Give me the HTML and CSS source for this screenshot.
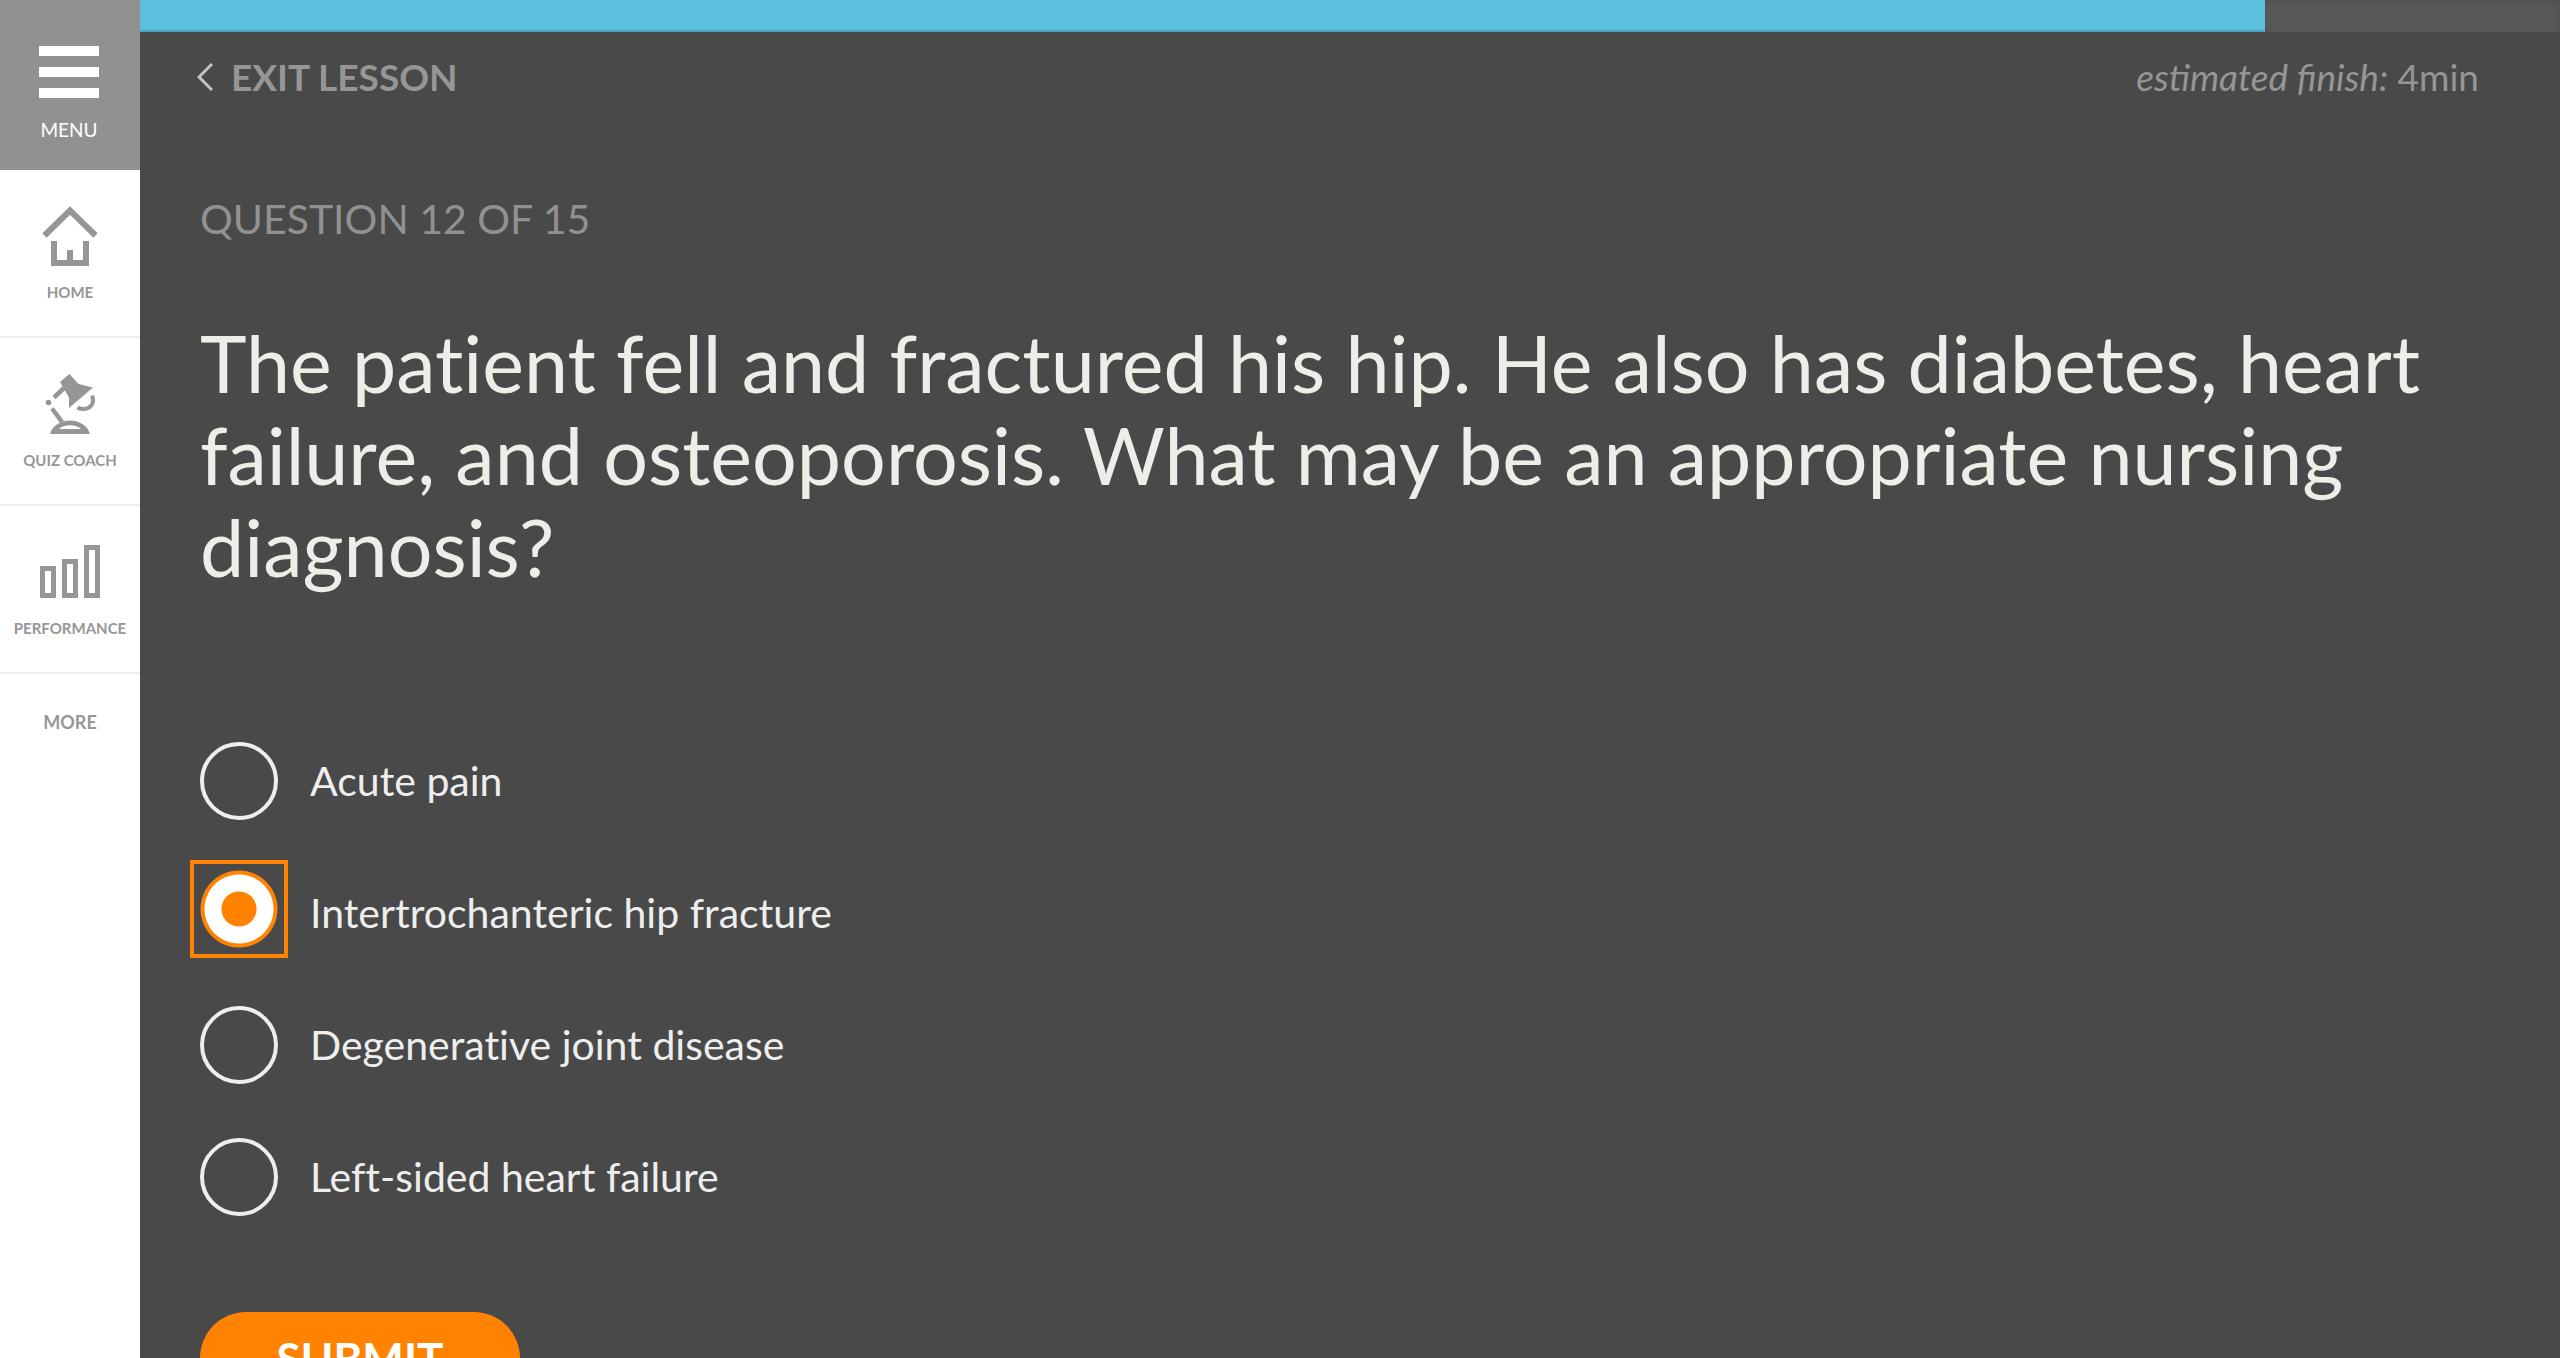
FILE: index.html
```html
<!DOCTYPE html>
<html lang="en">
<head>
  <meta charset="utf-8">
  <title>Lesson question</title>
  <link rel="stylesheet" href="styles.css">
</head>
<body>
  <div class="app">
    <nav class="sidebar" aria-label="Main">
      <button class="menu-button" type="button">
        <svg class="menu-icon" viewBox="0 0 60 52" aria-hidden="true">
          <path d="M0 0h60v10H0zM0 21h60v10H0zM0 42h60v10H0z" fill="currentColor"/>
        </svg>
        <span>MENU</span>
      </button>
      <a class="nav-item" href="#home">
        <svg class="nav-icon" viewBox="0 0 60 60" aria-hidden="true" fill="none" stroke="currentColor" stroke-width="6">
          <path d="M4.500 29.500L30 4.500l25.500 25"/>
          <path d="M14 35v22h32V35M30 44v14"/>
        </svg>
        <span>HOME</span>
      </a>
      <a class="nav-item" href="#quiz-coach">
        <svg class="nav-icon" viewBox="0 0 60 60" aria-hidden="true" fill="none" stroke="currentColor">
          <path d="M20 8L29.500 0l9 10L53 13.500 29 34V23.500z" fill="currentColor" stroke="none"/>
          <path d="M24.500 13.500L14 23.500M12 34.500l10 13.500" stroke-width="4.500"/>
          <circle cx="8.500" cy="28.500" r="2.800" fill="currentColor" stroke="none"/>
          <path d="M52 21.500c3 7-1 13-8 13.500-2.500 0-5-.5-6.500-1.500" stroke-width="4"/>
          <path d="M10 60c5-18 35-18 40 0zM19 55h22c-5-5-17-5-22 0z" fill="currentColor" fill-rule="evenodd" stroke="none"/>
        </svg>
        <span>QUIZ COACH</span>
      </a>
      <a class="nav-item" href="#performance">
        <svg class="nav-icon" viewBox="0 0 60 60" aria-hidden="true" fill="none" stroke="currentColor" stroke-width="5">
          <path d="M2.500 26.500h11v27h-11zM24.500 19.500h11v34h-11zM46.500 5.500h11v48h-11z"/>
        </svg>
        <span>PERFORMANCE</span>
      </a>
      <a class="nav-more" href="#more">MORE</a>
    </nav>

    <main class="lesson">
      <div class="progress" role="progressbar" aria-valuemin="0" aria-valuemax="100" aria-valuenow="88" aria-label="Lesson progress">
        <div class="progress-fill" style="width: 87.8%"></div>
      </div>

      <header class="topbar">
        <a class="exit" href="#exit">
          <svg class="exit-icon" viewBox="0 0 16 28" aria-hidden="true" fill="none" stroke="currentColor" stroke-width="3">
            <path d="M15 1L2 14l13 13"/>
          </svg>
          <span>EXIT LESSON</span>
        </a>
        <p class="estimate"><em>estimated finish:</em> 4min</p>
      </header>

      <form class="question">
        <p class="counter">QUESTION 12 OF 15</p>
        <h1 class="prompt" id="prompt">The patient fell and fractured his hip. He also has diabetes, heart failure, and osteoporosis. What may be an appropriate nursing diagnosis?</h1>
        <div class="answers" role="radiogroup" aria-labelledby="prompt">
          <label class="answer"><input type="radio" name="answer"><span>Acute pain</span></label>
          <label class="answer"><input type="radio" name="answer" checked><span>Intertrochanteric hip fracture</span></label>
          <label class="answer"><input type="radio" name="answer"><span>Degenerative joint disease</span></label>
          <label class="answer"><input type="radio" name="answer"><span>Left-sided heart failure</span></label>
        </div>
        <button class="submit" type="submit">SUBMIT</button>
      </form>
    </main>
  </div>
</body>
</html>
```
FILE: styles.css
```css
* {
  box-sizing: border-box;
}

body {
  margin: 0;
  font-family: Lato, "Open Sans", sans-serif;
  background: #494949;
  color: #eeeeee;
}

a {
  color: inherit;
  text-decoration: none;
}

button {
  border: 0;
  font-family: inherit;
}

.app {
  display: flex;
  height: 100vh;
}

/* Sidebar */
.sidebar {
  flex: 0 0 140px;
  display: flex;
  flex-direction: column;
  background: #ffffff;
  color: #969696;
}

.menu-button {
  height: 170px;
  padding: 46px 2px 0 0;
  display: flex;
  flex-direction: column;
  align-items: center;
  gap: 20px;
  background: #919191;
  color: #ffffff;
  font-size: 19px;
  line-height: 24px;
}

.menu-icon {
  width: 60px;
  height: 52px;
}

.nav-item {
  height: 168px;
  padding-top: 36px;
  display: flex;
  flex-direction: column;
  align-items: center;
  gap: 16px;
  border-bottom: 2px solid #eeeeee;
  font-size: 15px;
  font-weight: 700;
  line-height: 20px;
}

.nav-icon {
  width: 60px;
  height: 60px;
}

.nav-more {
  padding-top: 36px;
  text-align: center;
  font-size: 18px;
  font-weight: 700;
  line-height: 24px;
}

/* Lesson */
.lesson {
  flex: 1;
  min-width: 0;
  overflow-y: auto;
  scrollbar-width: none;
}

.progress {
  height: 32px;
  background: #585858;
  box-shadow: inset 0 2px 6px rgba(0, 0, 0, 0.1);
}

.progress-fill {
  height: 100%;
  background: #5bc0de;
  border-bottom: 2px solid #4ba3be;
}

.topbar {
  display: flex;
  justify-content: space-between;
  align-items: center;
  height: 90px;
  padding: 0 81px 0 57px;
  color: #969696;
}

.exit {
  display: flex;
  align-items: center;
  gap: 18px;
  font-size: 37px;
  font-weight: 700;
  line-height: 48px;
}

.exit-icon {
  width: 16px;
  height: 28px;
  color: #c4c4be;
}

.estimate {
  margin: 0;
  font-size: 37px;
  line-height: 48px;
}

.question {
  padding: 71px 60px 60px;
  font-variant-ligatures: none;
}

.counter {
  margin: 0;
  font-size: 41px;
  line-height: 52px;
  color: #919191;
}

.prompt {
  margin: 72px 0 0;
  font-size: 79px;
  font-weight: 400;
  line-height: 92px;
  color: #eeede7;
}

.answers {
  display: grid;
  gap: 54px;
  margin-top: 149px;
}

.answer {
  display: flex;
  align-items: center;
  gap: 32px;
  height: 78px;
  font-size: 41px;
  line-height: 52px;
}

.answer input {
  appearance: none;
  flex: none;
  width: 78px;
  height: 78px;
  margin: 0;
  border: 4px solid #eeeeee;
  border-radius: 50%;
}

.answer input:checked {
  margin-bottom: 8px;
  border: 0;
  border-radius: 0;
  background: radial-gradient(circle closest-side, #ff8300 17px, #ffffff 18px, #ffffff 34px, #ff8300 35px, #ff8300 38px, transparent 39px);
  outline: 4px solid #ff8300;
  outline-offset: 6px;
}

.submit {
  display: block;
  width: 320px;
  height: 92px;
  margin-top: 96px;
  border-radius: 46px;
  background: #ff8300;
  color: #ffffff;
  font-size: 44px;
  font-weight: 700;
  line-height: 52px;
}
```
